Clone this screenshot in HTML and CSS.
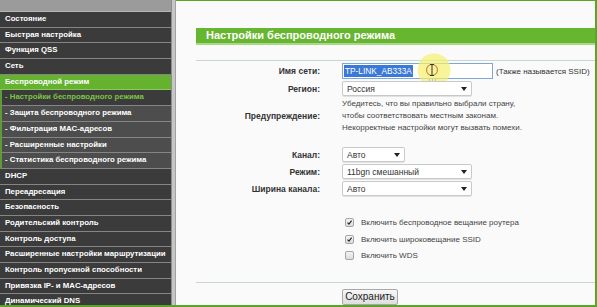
FILE: index.html
```html
<!DOCTYPE html>
<html lang="ru">
<head>
<meta charset="utf-8">
<title>Настройки беспроводного режима</title>
<link rel="stylesheet" href="styles.css">
</head>
<body>
<div class="page">
  <div class="main">
    <nav class="sidebar">
      <div class="side-top"></div>
      <div class="item">Состояние</div>
      <div class="item">Быстрая настройка</div>
      <div class="item">Функция QSS</div>
      <div class="item">Сеть</div>
      <div class="item item-active">Беспроводной режим</div>
      <div class="item sub sub-active">- Настройки беспроводного режима</div>
      <div class="item sub">- Защита беспроводного режима</div>
      <div class="item sub">- Фильтрация MAC-адресов</div>
      <div class="item sub">- Расширенные настройки</div>
      <div class="item sub">- Статистика беспроводного режима</div>
      <div class="item">DHCP</div>
      <div class="item">Переадресация</div>
      <div class="item">Безопасность</div>
      <div class="item">Родительский контроль</div>
      <div class="item">Контроль доступа</div>
      <div class="item">Расширенные настройки маршрутизации</div>
      <div class="item">Контроль пропускной способности</div>
      <div class="item">Привязка IP- и MAC-адресов</div>
      <div class="item">Динамический DNS</div>
    </nav>
    <div class="divider"></div>
    <section class="content">
      <h1 class="title">Настройки беспроводного режима</h1>
      <div class="rule"></div>
      <div class="form">
        <div class="row row-ssid">
          <div class="label">Имя сети:</div>
          <div class="field">
            <div class="input"><span class="selected">TP-LINK_AB333A</span></div>
            <span class="hint">(Также называется SSID)</span>
            <svg class="cursor-mark" width="36" height="36" viewBox="0 0 36 36">
              <circle cx="18" cy="17" r="16.5" fill="#f4ef6e" fill-opacity="0.7"/>
              <circle cx="16" cy="17" r="5.5" fill="none" stroke="#d7893a" stroke-width="1.2"/>
              <path d="M14 11.5h4M16 11.5v11M14 22.5h4" stroke="#333" stroke-width="1" fill="none"/>
              <path d="M13 27h1M16 27h1M19 27h1" stroke="#999" stroke-width="1"/>
            </svg>
          </div>
        </div>
        <div class="row row-region">
          <div class="label">Регион:</div>
          <div class="field">
            <div class="select wide"><span>Россия</span><i class="arrow"></i></div>
          </div>
        </div>
        <div class="row row-warn">
          <div class="label">Предупреждение:</div>
          <div class="field warn">
            <p>Убедитесь, что вы правильно выбрали страну,</p>
            <p>чтобы соответствовать местным законам.</p>
            <p>Некорректные настройки могут вызвать помехи.</p>
          </div>
        </div>
        <div class="row row-channel">
          <div class="label">Канал:</div>
          <div class="field">
            <div class="select narrow"><span>Авто</span><i class="arrow"></i></div>
          </div>
        </div>
        <div class="row row-sel">
          <div class="label">Режим:</div>
          <div class="field">
            <div class="select wide"><span>11bgn смешанный</span><i class="arrow"></i></div>
          </div>
        </div>
        <div class="row row-sel">
          <div class="label">Ширина канала:</div>
          <div class="field">
            <div class="select wide"><span>Авто</span><i class="arrow"></i></div>
          </div>
        </div>
        <div class="checks">
          <div class="check"><span class="box checked"><svg width="9" height="9" viewBox="0 0 9 9"><path d="M2 4.6l1.8 2L7.2 2" stroke="#222" stroke-width="1.4" fill="none"/></svg></span>Включить беспроводное вещание роутера</div>
          <div class="check"><span class="box checked"><svg width="9" height="9" viewBox="0 0 9 9"><path d="M2 4.6l1.8 2L7.2 2" stroke="#222" stroke-width="1.4" fill="none"/></svg></span>Включить широковещание SSID</div>
          <div class="check"><span class="box"></span>Включить WDS</div>
        </div>
      </div>
      <div class="rule rule-bottom"></div>
      <div class="actions"><button class="btn">Сохранить</button></div>
    </section>
  </div>
  <div class="bottom-bar"></div>
</div>
</body>
</html>
```
FILE: styles.css
```css
* { box-sizing: border-box; }
html, body { margin: 0; padding: 0; }
body {
  width: 597px;
  height: 307px;
  overflow: hidden;
  font-family: "Liberation Sans", Arial, sans-serif;
  background: #fafafa;
}
.page { display: flex; flex-direction: column; width: 597px; height: 307px; }
.main { display: flex; height: 305px; overflow: hidden; }
.bottom-bar { height: 2px; background: #5aa526; }

.sidebar {
  width: 171px;
  flex: none;
  background: #3b3b3b;
  display: flex;
  flex-direction: column;
}
.side-top { height: 12px; flex: none; background: #9b9b9b; border-bottom: 1px solid #b5b5b5; }
.item {
  flex: none;
  height: 15.7px;
  line-height: 14.7px;
  padding-left: 5px;
  border-bottom: 1px solid #858585;
  color: #fff;
  font-size: 7.8px;
  font-weight: bold;
  white-space: nowrap;
  background: #3b3b3b;
}
.item-active { background: #64b22e; border-bottom-color: #8cc862; }
.sub { background: #4d4d4d; border-left: 2px solid #5e9a36; padding-left: 3px; }
.sub-active { background: #3b3b3b; color: #7cc444; }

.divider {
  width: 5px;
  flex: none;
  background: #c6c6c6;
  border-left: 1px solid #8d8d8d;
  border-right: 1px solid #a0a0a0;
}

.content {
  flex: 1;
  border-top: 1px solid #5aa526;
  border-right: 2px solid #5aa526;
  background: #fafafa;
  padding-left: 20px;
  display: flex;
  flex-direction: column;
}
.title {
  margin: 27px 0 0 0;
  height: 17px;
  background: #66b630;
  border-bottom: 2px solid #a9d88a;
  color: #fff;
  font-size: 11px;
  font-weight: bold;
  line-height: 15px;
  padding-left: 10px;
}
.rule { height: 2px; margin-top: 15px; background: #8fab8f; border-bottom: 1px solid #c9d7c9; }

.form { display: flex; flex-direction: column; }
.row { display: flex; align-items: center; }
.label {
  width: 124px;
  flex: none;
  text-align: right;
  font-size: 8.5px;
  font-weight: bold;
  color: #333;
}
.field { margin-left: 22px; display: flex; align-items: center; position: relative; }

.row-ssid { margin-top: 2px; height: 16px; }
.row-region { margin-top: 2px; height: 15px; }
.row-warn { margin-top: 2px; }
.row-channel { margin-top: 13px; height: 15px; }
.row-sel { margin-top: 2px; height: 15px; }

.input {
  width: 151px;
  height: 16px;
  border: 1px solid #7ea6d6;
  background: #fff;
  padding: 1px 1px;
  display: flex;
  align-items: stretch;
}
.selected {
  background: #3b79d8;
  color: #fff;
  font-size: 8.3px;
  line-height: 12px;
  padding: 0 1px;
}
.hint { margin-left: 3px; font-size: 8px; color: #333; white-space: nowrap; }
.cursor-mark { position: absolute; left: 74px; top: -10px; }

.select {
  height: 15px;
  border: 1px solid #c9c9c9;
  border-radius: 2px;
  background: #fff;
  box-shadow: 0 1px 0 #e2e2e2;
  display: flex;
  align-items: center;
  justify-content: space-between;
  padding: 0 4px 0 4px;
  font-size: 8.5px;
  color: #333;
}
.select.wide { width: 130px; }
.select.narrow { width: 63px; }
.arrow {
  width: 0; height: 0;
  border-left: 3px solid transparent;
  border-right: 3px solid transparent;
  border-top: 4px solid #222;
}

.warn { flex-direction: column; align-items: flex-start; }
.warn p { margin: 0; font-size: 8px; line-height: 12px; color: #444; white-space: nowrap; }

.checks { margin-top: 18px; margin-left: 146px; display: flex; flex-direction: column; }
.check { height: 16.5px; display: flex; align-items: center; font-size: 8px; color: #444; }
.box {
  width: 9px; height: 9px;
  margin-left: 3px;
  margin-right: 7px;
  border: 1px solid #a5a5a5;
  border-radius: 2px;
  background: linear-gradient(#f4f4f4, #dcdcdc);
  display: flex;
  align-items: center;
  justify-content: center;
}
.box svg { display: block; }

.rule-bottom { margin-top: 18px; }
.actions { margin-top: 3px; padding-left: 146px; }
.btn {
  width: 56px;
  height: 16px;
  padding: 0;
  border: 1px solid #a8a8a8;
  border-radius: 2px;
  background: linear-gradient(#f7f7f7, #dedede);
  font-family: "Liberation Sans", Arial, sans-serif;
  font-size: 10px;
  color: #222;
  line-height: 14px;
}
```
